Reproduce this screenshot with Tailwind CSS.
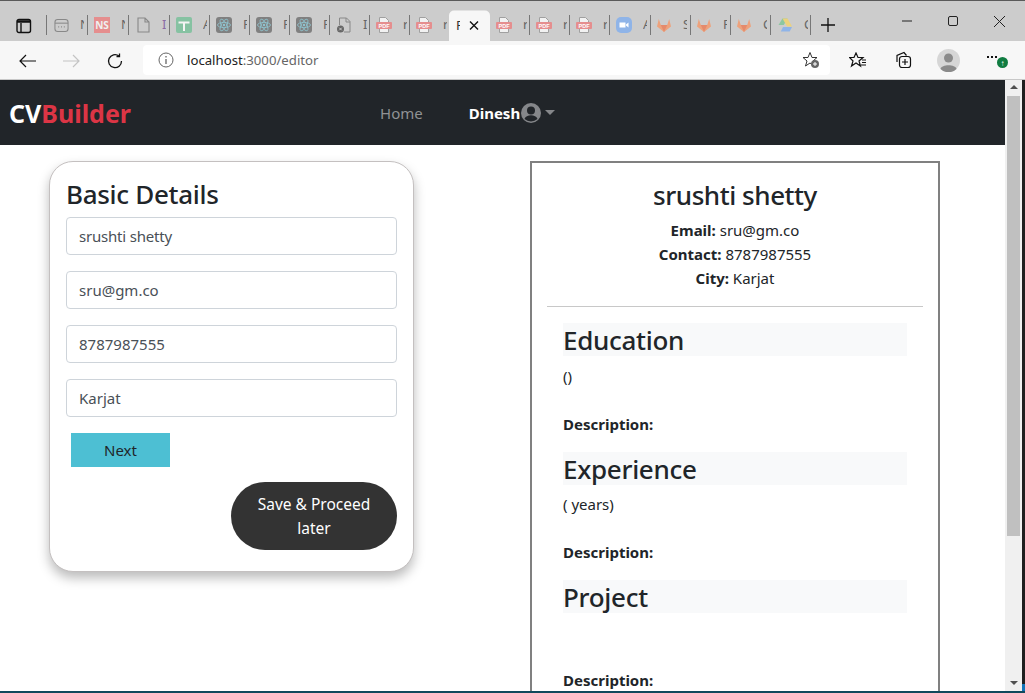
<!DOCTYPE html>
<html lang="en">
<head>
    <meta charset="UTF-8">
    <title>CV Builder</title>
    <script src="https://cdn.jsdelivr.net/npm/@tailwindcss/browser@4"></script>
</head>
<body class="bg-white font-['Noto_Sans',sans-serif] text-[#212529] overflow-hidden">
    <svg class="hidden">
        <symbol id="react" viewBox="0 0 16 16"><rect width="16" height="16" rx="3" fill="#808080"/><g fill="none" stroke="#8fc4cf" stroke-width=".8"><ellipse cx="8" cy="8" rx="6.5" ry="2.6"/><ellipse cx="8" cy="8" rx="6.5" ry="2.6" transform="rotate(60 8 8)"/><ellipse cx="8" cy="8" rx="6.5" ry="2.6" transform="rotate(120 8 8)"/></g><circle cx="8" cy="8" r="1.2" fill="#8fc4cf"/></symbol>
        <symbol id="pdf" viewBox="0 0 16 16"><path d="M3.500 .5h6l3 3v12h-9z" fill="#f2f2f2" stroke="#a0a0a0"/><rect x="0" y="5" width="16" height="7" rx="1" fill="#e58e8e"/><text x="8" y="10.6" font-size="5.5" font-weight="700" text-anchor="middle" fill="#fff" font-family="Liberation Sans">PDF</text></symbol>
        <symbol id="fox" viewBox="0 0 16 16"><path d="M8 15 1 9.500 2.800 2l2 6h6.400l2-6L15 9.500z" fill="#eda27c"/><path d="M8 15 4.800 8h6.400z" fill="#e58a6b"/></symbol>
    </svg>

    <div class="w-[1025px] h-[693px] flex flex-col overflow-hidden">
        <!-- tab strip -->
        <div class="h-[41px] shrink-0 bg-[#cccccc] border-t border-t-[#5a5a5a] flex items-start relative">
            <div class="w-[46px] h-full flex items-center justify-center pt-[9px] pl-[1px]">
                <svg width="16" height="16" viewBox="0 0 16 16" fill="none" stroke="#111" stroke-width="1.400"><rect x="1" y="1.500" width="13.500" height="13" rx="2"/><path d="M5 5v9.500"/><path d="M1 3.500h13.500" stroke-width="2.500"/></svg>
            </div>
            <div class="flex mt-[14px] items-center h-[20px] text-[13px] text-[#666]">
                <div class="w-[41px] h-[20px] border-l border-l-[#777] flex items-center pl-[7px] gap-[11px] overflow-hidden"><svg width="15" height="15" viewBox="0 0 16 16" class="shrink-0" fill="none" stroke="#888" stroke-width="1.100"><rect x="1" y="1.500" width="14" height="13" rx="3"/><path d="M1 5.500h14"/><path d="M4.500 9.500h1M7.500 9.500h1M10.500 9.500h1" stroke-width="1.500"/></svg><span class="w-[4px] overflow-hidden">N</span></div>
                <div class="w-[41px] h-[20px] border-l border-l-[#777] flex items-center pl-[6px] gap-[11px] overflow-hidden"><div class="w-[16px] h-[16px] shrink-0 bg-[#e58e8e] text-[#f0f0f0] text-[10px] font-bold flex items-center justify-center leading-none">NS</div><span class="w-[4px] overflow-hidden">N</span></div>
                <div class="w-[41px] h-[20px] border-l border-l-[#777] flex items-center pl-[8px] gap-[12px] overflow-hidden"><svg width="13" height="16" viewBox="0 0 13 16" class="shrink-0" fill="none" stroke="#888" stroke-width="1.100"><path d="M1 1h7l4 4v10H1zM8 1v4h4"/></svg><span class="w-[4px] overflow-hidden text-[#8a6aa5]">I</span></div>
                <div class="w-[40px] h-[20px] border-l border-l-[#777] flex items-center pl-[6px] gap-[11px] overflow-hidden"><svg width="16" height="16" viewBox="0 0 16 16" class="shrink-0"><rect width="16" height="16" rx="2" fill="#86c2a2"/><path d="M2.500 5.500h11M8 5.500v8.500" stroke="#f4f4f4" stroke-width="2"/></svg><span class="w-[4px] overflow-hidden">A</span></div>
                <div class="w-[40px] h-[20px] border-l border-l-[#777] flex items-center pl-[6px] gap-[11px] overflow-hidden"><svg width="16" height="16" class="shrink-0"><use href="#react"/></svg><span class="w-[4px] overflow-hidden">F</span></div>
                <div class="w-[40px] h-[20px] border-l border-l-[#777] flex items-center pl-[6px] gap-[11px] overflow-hidden"><svg width="16" height="16" class="shrink-0"><use href="#react"/></svg><span class="w-[4px] overflow-hidden">F</span></div>
                <div class="w-[40px] h-[20px] border-l border-l-[#777] flex items-center pl-[6px] gap-[11px] overflow-hidden"><svg width="16" height="16" class="shrink-0"><use href="#react"/></svg><span class="w-[4px] overflow-hidden">F</span></div>
                <div class="w-[40px] h-[20px] border-l border-l-[#777] flex items-center pl-[6px] gap-[11px] overflow-hidden"><svg width="16" height="16" viewBox="0 0 16 16" class="shrink-0"><path d="M3.500 8V1h7l3.500 3.500V15H8M10 1v4h4" fill="none" stroke="#888"/><circle cx="4.500" cy="12" r="3.500" fill="#666"/><path d="M3.200 10.700l2.600 2.600m0-2.600l-2.600 2.600" stroke="#ddd" stroke-width=".8"/></svg><span class="w-[4px] overflow-hidden">I</span></div>
                <div class="w-[40px] h-[20px] border-l border-l-[#777] flex items-center pl-[6px] gap-[11px] overflow-hidden"><svg width="16" height="16" class="shrink-0"><use href="#pdf"/></svg><span class="w-[4px] overflow-hidden">r</span></div>
                <div class="w-[40px] h-[20px] border-l border-l-[#777] flex items-center pl-[6px] gap-[11px] overflow-hidden"><svg width="16" height="16" class="shrink-0"><use href="#pdf"/></svg><span class="w-[4px] overflow-hidden">r</span></div>
                <div class="w-[41px] h-[31px] shrink-0 translate-y-[0.5px] bg-[#f7f7f7] rounded-t-[5px] flex items-center pl-[7px] gap-[9px] overflow-hidden text-[#333]"><span class="w-[4px] overflow-hidden">F</span><svg width="10" height="10" viewBox="0 0 10 10" stroke="#111" stroke-width="1.400"><path d="M1 1l8 8M9 1l-8 8"/></svg></div>
                <div class="w-[39px] h-[20px] flex items-center pl-[6px] gap-[11px] overflow-hidden"><svg width="16" height="16" class="shrink-0"><use href="#pdf"/></svg><span class="w-[4px] overflow-hidden">r</span></div>
                <div class="w-[40px] h-[20px] border-l border-l-[#777] flex items-center pl-[6px] gap-[11px] overflow-hidden"><svg width="16" height="16" class="shrink-0"><use href="#pdf"/></svg><span class="w-[4px] overflow-hidden">r</span></div>
                <div class="w-[40px] h-[20px] border-l border-l-[#777] flex items-center pl-[6px] gap-[11px] overflow-hidden"><svg width="16" height="16" class="shrink-0"><use href="#pdf"/></svg><span class="w-[4px] overflow-hidden">r</span></div>
                <div class="w-[41px] h-[20px] border-l border-l-[#777] flex items-center pl-[6px] gap-[11px] overflow-hidden"><svg width="16" height="16" viewBox="0 0 16 16" class="shrink-0"><rect width="16" height="16" rx="5" fill="#8fb4e8"/><path d="M3.500 5.500h6v5h-6zM10 7.500l2.500-2v5l-2.500-2z" fill="#fff"/></svg><span class="w-[4px] overflow-hidden">A</span></div>
                <div class="w-[40px] h-[20px] border-l border-l-[#777] flex items-center pl-[5px] gap-[11px] overflow-hidden"><svg width="16" height="16" class="shrink-0"><use href="#fox"/></svg><span class="w-[4px] overflow-hidden">S</span></div>
                <div class="w-[40px] h-[20px] border-l border-l-[#777] flex items-center pl-[5px] gap-[11px] overflow-hidden"><svg width="16" height="16" class="shrink-0"><use href="#fox"/></svg><span class="w-[4px] overflow-hidden">F</span></div>
                <div class="w-[40px] h-[20px] border-l border-l-[#777] flex items-center pl-[5px] gap-[11px] overflow-hidden"><svg width="16" height="16" class="shrink-0"><use href="#fox"/></svg><span class="w-[4px] overflow-hidden">C</span></div>
                <div class="w-[41px] h-[20px] border-x border-x-[#777] flex items-center pl-[6px] gap-[11px] overflow-hidden"><svg width="16" height="16" viewBox="0 0 16 16" class="shrink-0"><path d="M5.500 1.500h5L6.800 8H1.500z" fill="#8cc7a0"/><path d="M10.500 1.500 15 9.500h-5L5.500 1.500z" fill="#ecd27c"/><path d="M3.800 14.500 6 10h9l-2.300 4.500z" fill="#8fb4e8"/></svg><span class="w-[4px] overflow-hidden">C</span></div>
                <svg width="14" height="14" viewBox="0 0 14 14" class="ml-[10px]" stroke="#111" stroke-width="1.300"><path d="M7 0v14M0 7h14"/></svg>
            </div>
            <div class="absolute right-[3px] top-0 h-full w-[138px] flex items-center">
                <div class="w-[46px] flex justify-center"><svg width="10" height="10" viewBox="0 0 10 10" stroke="#222"><path d="M0 5h10"/></svg></div>
                <div class="w-[46px] flex justify-center"><svg width="10" height="10" viewBox="0 0 10 10" fill="none" stroke="#222"><rect x=".5" y=".5" width="9" height="9" rx="1.500"/></svg></div>
                <div class="w-[46px] flex justify-center"><svg width="11" height="11" viewBox="0 0 11 11" stroke="#222"><path d="M0 0l11 11M11 0L0 11"/></svg></div>
            </div>
        </div>

        <!-- address bar -->
        <div class="h-[39px] shrink-0 bg-[#f7f7f7] border-b border-b-[#c8c8c8] flex items-center relative">
            <div class="w-[143px] flex items-center pl-[19px] pt-[1px] gap-[27px]">
                <svg width="17" height="14" viewBox="0 0 17 14" fill="none" stroke="#111" stroke-width="1.200"><path d="M17 7H1M7 1 1 7l6 6"/></svg>
                <svg width="17" height="14" viewBox="0 0 17 14" fill="none" stroke="#c4c4c4" stroke-width="1.200"><path d="M0 7h16M10 1l6 6-6 6"/></svg>
                <svg width="16" height="16" viewBox="0 0 16 16" fill="none" stroke="#111" stroke-width="1.300"><path d="M14.500 8A6.500 6.500 0 1 1 12 3"/><path d="M12.500 .5V3.500H9.500"/></svg>
            </div>
            <div class="w-[687px] h-[30px] bg-white rounded-[4px] flex items-center pl-[15px] text-[13.200px]">
                <svg width="16" height="16" viewBox="0 0 16 16" fill="none" stroke="#666"><circle cx="8" cy="8" r="7"/><path d="M8 7v5M8 4v1.500" stroke-width="1.300"/></svg>
                <span class="ml-[13px] mt-[1px] text-[#222]">localhost<span class="text-[#666]">:3000/editor</span></span>
                <svg width="18" height="18" viewBox="0 0 18 18" class="ml-auto mr-[10px]"><path d="M8 1.500l2 5h5l-4 3.500 1.500 5L8 12l-4.500 3L5 10 1 6.500h5z" fill="none" stroke="#333"/><circle cx="13" cy="13" r="4" fill="#666"/><path d="M13 11v4M11 13h4" stroke="#fff"/></svg>
            </div>
            <svg width="18" height="16" viewBox="0 0 18 16" class="ml-[19px]" fill="none" stroke="#111" stroke-width="1.200"><path d="M7 1l2 4.500h5L10 9l1.500 5L7 11l-4.500 3L4 9 0.500 5.500h4.500z"/><path d="M13 8h4M13 10.500h4M12 13h5"/></svg>
            <svg width="18" height="18" viewBox="0 0 18 18" class="ml-[27px]" fill="none" stroke="#111" stroke-width="1.200"><path d="M3 11V4.500L10 1.500l2.500 3"/><rect x="5.500" y="5.500" width="11" height="11" rx="2.500"/><path d="M11 8v6M8 11h6"/></svg>
            <svg width="23" height="23" viewBox="0 0 23 23" class="ml-[25px]"><circle cx="11.500" cy="11.500" r="11.500" fill="#d6d6d6"/><circle cx="11.500" cy="9" r="4.500" fill="#8a8a8a"/><path d="M3.500 20c1-5 15-5 16 0a11.500 11.500 0 0 1-16 0z" fill="#8a8a8a"/></svg>
            <div class="ml-[27px] relative w-[16px] h-[14px]">
                <div class="flex gap-[2px] mt-[3px]"><div class="w-[2px] h-[2px] bg-[#111]"></div><div class="w-[2px] h-[2px] bg-[#111]"></div><div class="w-[2px] h-[2px] bg-[#111]"></div></div>
                <div class="absolute left-[10px] top-[4px] w-[11px] h-[11px] rounded-full bg-[#107c41] text-white text-[8px] font-bold leading-[11px] text-center">↑</div>
            </div>
        </div>

        <!-- page + scrollbar -->
        <div class="flex-1 flex min-h-0 bg-[#10495c] pb-[2px]">
            <div class="w-[1005px] overflow-hidden bg-white">
                <nav class="h-[65px] bg-[#212529] flex items-center relative">
                    <a class="ml-[9px] mt-[2px] text-[25px] font-bold text-white leading-none">CV<span class="text-[#dc3545]">Builder</span></a>
                    <a class="ml-[249px] mt-[2px] text-[#909294] text-[15px]">Home</a>
                    <div class="ml-[46px] mt-[2px] flex items-center font-bold text-white text-[15px]">
                        <span>Dinesh</span>
                        <svg width="20" height="20" viewBox="0 0 20 20" class="ml-[1px] -mt-[2px]"><circle cx="10" cy="10" r="10" fill="#85878a"/><circle cx="10" cy="7.500" r="4" fill="#212529"/><path d="M3.500 16c1.500-5 11.500-5 13 0a10 10 0 0 1-13 0z" fill="#212529"/></svg>
                        <div class="ml-[4px] -mt-[3px] w-0 h-0 border-x-[5px] border-x-transparent border-t-[5px] border-t-[#85878a]"></div>
                    </div>
                </nav>

                <div class="flex items-start">
                    <div class="ml-[49px] mt-[16px] w-[365px] h-[411px] rounded-[24px] border border-[#c4c0c0] shadow-[0_6px_12px_rgba(0,0,0,0.27)] bg-white px-[16px] pt-[13px]">
                        <h3 class="text-[26px] tracking-[-0.3px] font-medium leading-[38px] mb-[4px]">Basic Details</h3>
                        <input class="block w-full h-[38px] border border-[#ced4da] rounded-[4px] px-[12px] text-[15px] tracking-[-0.2px] text-[#495057] mb-[16px]" value="srushti shetty">
                        <input class="block w-full h-[38px] border border-[#ced4da] rounded-[4px] px-[12px] text-[15px] text-[#495057] mb-[16px]" value="sru@gm.co">
                        <input class="block w-full h-[38px] border border-[#ced4da] rounded-[4px] px-[12px] text-[15px] text-[#495057] mb-[16px]" value="8787987555">
                        <input class="block w-full h-[38px] border border-[#ced4da] rounded-[4px] px-[12px] text-[15px] text-[#495057] mb-[16px]" value="Karjat">
                        <button class="block ml-[5px] w-[99px] h-[34px] bg-[#4dbfd3] text-[15px]">Next</button>
                        <div class="flex justify-end mt-[15px]">
                            <button class="w-[166px] h-[68px] rounded-[34px] bg-[#333333] text-white text-[15.500px] leading-[24px] px-[12px]">Save &amp; Proceed later</button>
                        </div>
                    </div>

                    <div class="ml-[116px] mt-[16px] w-[410px] h-[560px] border-2 border-[#808080] px-[15px] pt-[14px] shrink-0">
                        <div class="text-center">
                            <h4 class="text-[26px] tracking-[-0.45px] font-medium leading-[36px] mb-[5px]">srushti shetty</h4>
                            <p class="text-[15px] leading-[24px]"><b>Email:</b> sru@gm.co</p>
                            <p class="text-[15px] leading-[24px]"><b>Contact:</b> 8787987555</p>
                            <p class="text-[15px] leading-[24px]"><b>City:</b> Karjat</p>
                        </div>
                        <hr class="mt-[16px] border-t border-[#c8c8c8]">
                        <div class="px-[16px] pt-[16px] text-[15px]">
                            <h3 class="h-[33px] bg-[#f8f9fa] text-[26px] tracking-[-0.3px] font-medium leading-[34px]">Education</h3>
                            <p class="mt-[8px] leading-[24px]">()</p>
                            <p class="mt-[24px] leading-[24px] font-bold">Description:</p>
                            <h3 class="mt-[16px] h-[33px] bg-[#f8f9fa] text-[26px] tracking-[-0.3px] font-medium leading-[34px]">Experience</h3>
                            <p class="mt-[7px] leading-[24px]">( years)</p>
                            <p class="mt-[24px] leading-[24px] font-bold">Description:</p>
                            <h3 class="mt-[16px] h-[33px] bg-[#f8f9fa] text-[26px] tracking-[-0.3px] font-medium leading-[34px]">Project</h3>
                            <p class="mt-[55px] leading-[24px] font-bold">Description:</p>
                        </div>
                    </div>
                </div>
            </div>

            <!-- scrollbar -->
            <div class="w-[17px] bg-[#f0f0f0] relative flex flex-col items-center">
                <div class="mt-[5px] w-0 h-0 border-x-[4px] border-x-transparent border-b-[4px] border-b-[#505050]"></div>
                <div class="mt-[7px] self-start ml-[2px] w-[13px] h-[440px] bg-[#c0c0c0]"></div>
                <div class="mt-auto mb-[6px] w-0 h-0 border-x-[4px] border-x-transparent border-t-[4px] border-t-[#505050]"></div>
            </div>
            <div class="flex-1 bg-[#1f1f1f] flex flex-col justify-end"><div class="h-[7px] bg-[#1273b8]"></div></div>
        </div>
    </div>
</body>
</html>
